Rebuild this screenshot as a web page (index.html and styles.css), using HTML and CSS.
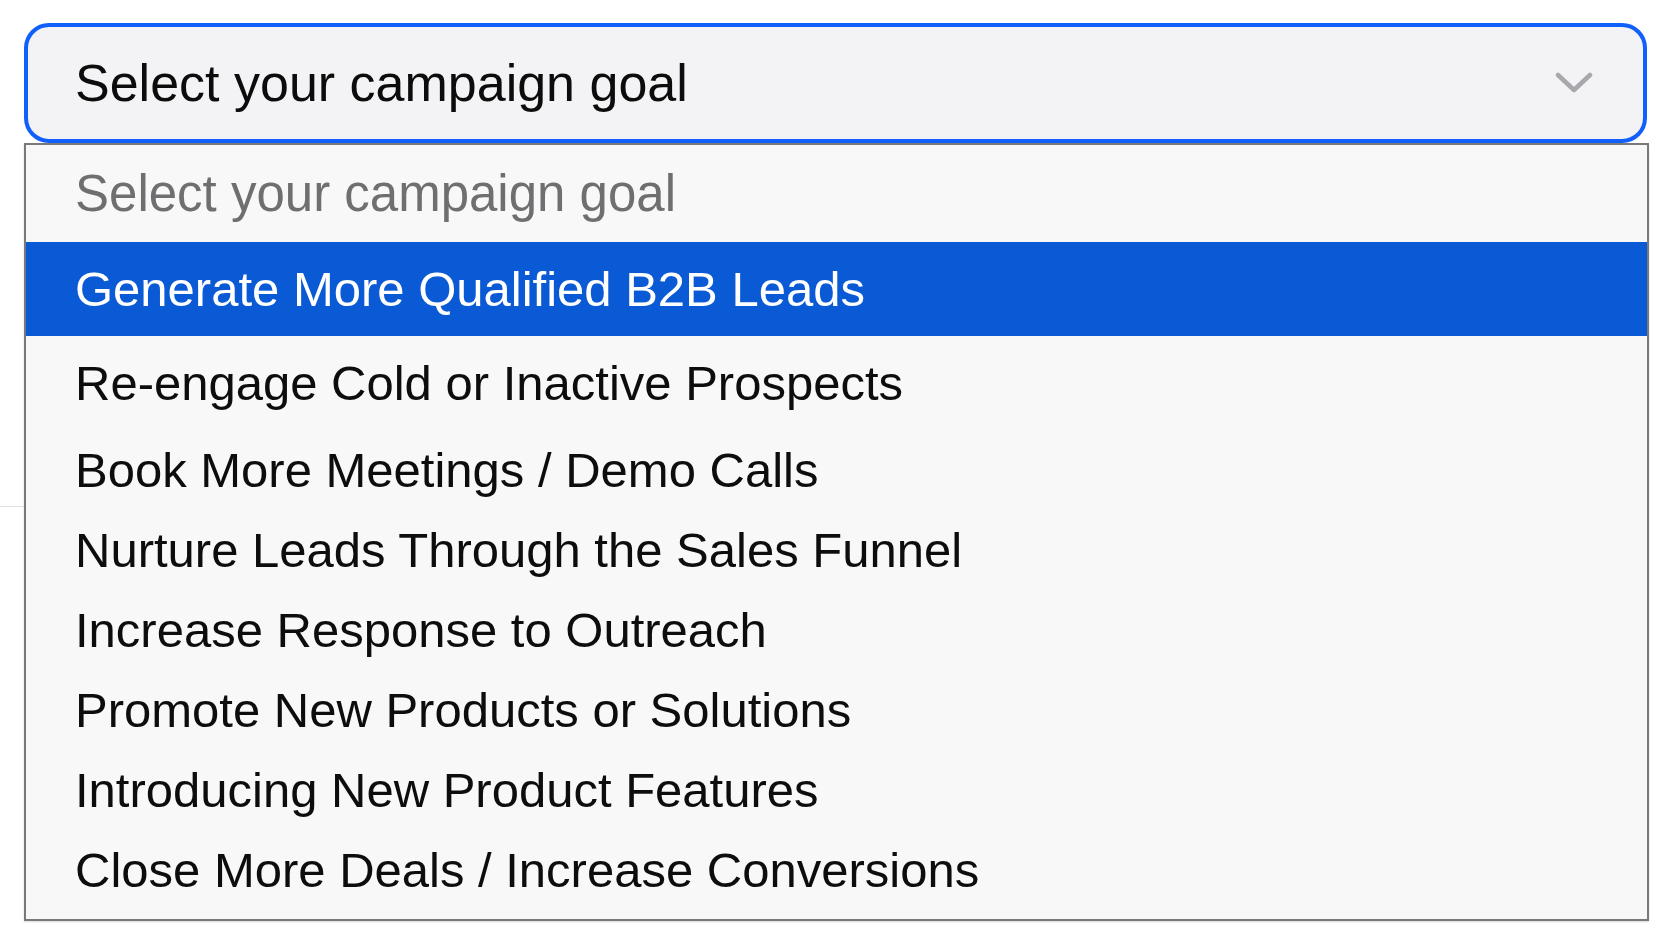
FILE: index.html
```html
<!DOCTYPE html>
<html lang="en">
<head>
    <meta charset="UTF-8">
    <meta name="viewport" content="width=device-width, initial-scale=1.0">
    <title>Campaign Goal</title>
    <link rel="stylesheet" href="styles.css">
</head>
<body>
    <div class="page-rule"></div>

    <!-- Campaign goal dropdown (open) -->
    <div class="goal-select">
        <button type="button" class="select-trigger">
            <span>Select your campaign goal</span>
            <svg class="chevron" width="38" height="22" viewBox="0 0 38 22">
                <polyline points="3,3 19,18 35,3" fill="none" stroke="#a9a7ad" stroke-width="4.5" stroke-linecap="round" stroke-linejoin="round"/>
            </svg>
        </button>

        <ul class="select-menu">
            <li class="option placeholder roomy first">Select your campaign goal</li>
            <li class="option roomy selected">Generate More Qualified B2B Leads</li>
            <li class="option roomy">Re-engage Cold or Inactive Prospects</li>
            <li class="option">Book More Meetings / Demo Calls</li>
            <li class="option">Nurture Leads Through the Sales Funnel</li>
            <li class="option">Increase Response to Outreach</li>
            <li class="option">Promote New Products or Solutions</li>
            <li class="option">Introducing New Product Features</li>
            <li class="option">Close More Deals / Increase Conversions</li>
        </ul>
    </div>
</body>
</html>
```

FILE: styles.css
```css
* {
    box-sizing: border-box;
}

body {
    margin: 0;
    padding: 23px 28px 0 24px;
    background: #ffffff;
    font-family: "Liberation Sans", Arial, sans-serif;
    color: #111;
    position: relative;
    height: 938px;
    overflow: hidden;
}

/* faint line of the page behind the menu */
.page-rule {
    position: absolute;
    left: 0;
    top: 506px;
    width: 30px;
    border-top: 1px solid #e2e2e6;
}

.goal-select {
    position: relative;
    width: 1625px;
}

.select-trigger {
    display: flex;
    align-items: center;
    justify-content: space-between;
    width: 1623px;
    height: 120px;
    padding: 0 50px 0 47px;
    border: 4px solid #1160fb;
    border-radius: 25px;
    background: #f3f3f5;
    font-family: inherit;
    font-size: 52px;
    color: #0c0c0c;
    text-align: left;
    cursor: pointer;
}

.chevron {
    margin-top: 0;
}

.select-menu {
    list-style: none;
    margin: 0;
    padding: 0 0 9px;
    border: 2px solid #79797b;
    background: #f8f8f8;
    box-shadow: 0 1px 2px rgba(0, 0, 0, 0.15);
}

.option {
    display: flex;
    align-items: center;
    height: 80px;
    padding-left: 49px;
    font-size: 49px;
    color: #0d0d0d;
}

.option.roomy {
    height: 94px;
}

.option.first {
    height: 97px;
}

.option.placeholder {
    color: #6f6f72;
    font-size: 51px;
}

.option.selected {
    background: #0a5ad6;
    color: #fff;
}
```
